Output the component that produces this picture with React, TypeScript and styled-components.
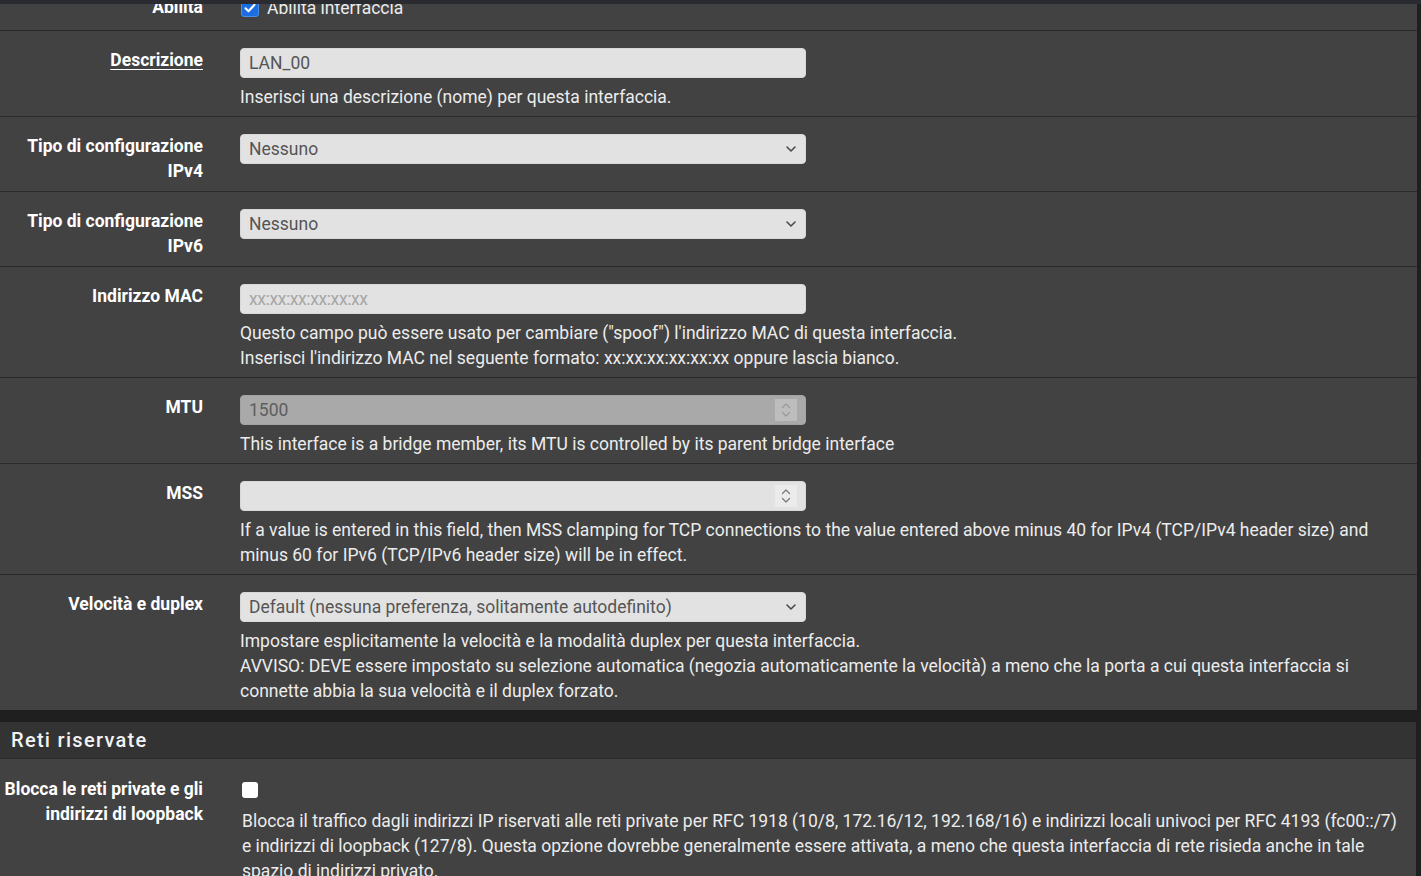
import styled, { createGlobalStyle } from "styled-components";
import { ReactNode } from "react";

const GlobalStyle = createGlobalStyle`
  html, body {
    margin: 0;
    padding: 0;
    background: #1f1f1f;
    font-family: Roboto, "Liberation Sans", sans-serif;
  }
`;

const Viewport = styled.div`
  height: 876px;
  overflow: hidden;
`;

const TopBar = styled.div`
  position: fixed;
  top: 0;
  left: 0;
  right: 0;
  height: 4px;
  background: #2a2a31;
  z-index: 10;
`;

const Panel = styled.section<{ $offset?: number; $gapRight: number }>`
  background: #424242;
  margin-top: ${(p) => p.$offset ?? 0}px;
  margin-right: ${(p) => p.$gapRight}px;
`;

const SectionHeader = styled.h2`
  margin: 0;
  height: 36px;
  line-height: 36px;
  padding-left: 11px;
  background: #333333;
  border-bottom: 1px solid #2b2b2b;
  color: #f2f2f2;
  font-size: 20px;
  font-weight: 500;
  letter-spacing: 1.3px;
`;

const Row = styled.div<{ $top?: number; $bottom?: number }>`
  display: grid;
  grid-template-columns: 203px 1fr;
  column-gap: 37px;
  padding: ${(p) => p.$top ?? 17}px 12px ${(p) => p.$bottom ?? 6}px 0;
  border-bottom: 1px solid #2b2b2b;
  &:last-child {
    border-bottom: none;
  }
`;

const Label = styled.div<{ $link?: boolean }>`
  text-align: right;
  font-weight: 700;
  font-size: 17.5px;
  line-height: 25px;
  color: #ffffff;
  text-decoration: ${(p) => (p.$link ? "underline" : "none")};
  text-underline-offset: 3px;
`;

const Control = styled.div<{ $indent?: number }>`
  display: flex;
  flex-direction: column;
  align-items: flex-start;
  min-width: 0;
  padding-left: ${(p) => p.$indent ?? 0}px;
`;

const Help = styled.div<{ $top?: number }>`
  margin-top: ${(p) => p.$top ?? 7}px;
  font-size: 17.5px;
  line-height: 25px;
  color: #ececec;
`;

const FieldBox = styled.div`
  position: relative;
  width: 566px;
  height: 30px;
`;

const TextInput = styled.input<{ $disabled?: boolean }>`
  box-sizing: border-box;
  width: 100%;
  height: 30px;
  margin: 0;
  padding: 0 8px;
  border: 1px solid ${(p) => (p.$disabled ? "#a3a3a3" : "#d8d8d8")};
  border-radius: 4px;
  background: ${(p) => (p.$disabled ? "#a9a9a9" : "#e2e2e2")};
  color: ${(p) => (p.$disabled ? "#5e5e5e" : "#555555")};
  font-family: Roboto, "Liberation Sans", sans-serif;
  font-size: 17.5px;
  outline: none;
  &::placeholder {
    color: #a6a6a6;
    letter-spacing: -0.4px;
  }
`;

const SelectBox = styled.div`
  box-sizing: border-box;
  display: flex;
  align-items: center;
  justify-content: space-between;
  width: 566px;
  height: 30px;
  padding: 0 8px 0 8px;
  border: 1px solid #d8d8d8;
  border-radius: 4px;
  background: #e2e2e2;
  color: #555555;
  font-size: 17.5px;
`;

const Spinner = styled.div<{ $disabled?: boolean }>`
  position: absolute;
  top: 4px;
  right: 9px;
  width: 22px;
  height: 22px;
  display: flex;
  flex-direction: column;
  align-items: center;
  justify-content: center;
  background: ${(p) => (p.$disabled ? "#bdbdbd" : "#ebebeb")};
  color: ${(p) => (p.$disabled ? "#9a9a9a" : "#7a7a7a")};
`;

const CheckLine = styled.label`
  display: flex;
  align-items: center;
  gap: 8px;
  height: 25px;
  font-size: 17.5px;
  color: #ececec;
`;

const Check = styled.span<{ $checked?: boolean }>`
  box-sizing: border-box;
  display: inline-flex;
  align-items: center;
  justify-content: center;
  margin-left: ${(p) => (p.$checked ? 1 : 0)}px;
  width: ${(p) => (p.$checked ? 18 : 16)}px;
  height: ${(p) => (p.$checked ? 18 : 16)}px;
  border-radius: 3px;
  background: ${(p) => (p.$checked ? "#1a6ee0" : "#ffffff")};
  border: ${(p) => (p.$checked ? "1px solid #4d8fe8" : "none")};
`;

const Chevron = () => (
  <svg width="12" height="12" viewBox="0 0 12 12" fill="none">
    <path d="M2 4l4 4 4-4" stroke="#4a4a4a" strokeWidth="1.6" strokeLinecap="round" strokeLinejoin="round" />
  </svg>
);

const SpinArrows = () => (
  <svg width="10" height="16" viewBox="0 0 10 16" fill="none">
    <path d="M1.5 5.5L5 2l3.5 3.5M1.5 10.5L5 14l3.5-3.5" stroke="currentColor" strokeWidth="1.3" strokeLinecap="round" strokeLinejoin="round" />
  </svg>
);

const Tick = () => (
  <svg width="14" height="14" viewBox="0 0 14 14" fill="none">
    <path d="M2.5 7.2l3 3 6-6.5" stroke="#fff" strokeWidth="2" strokeLinecap="round" strokeLinejoin="round" />
  </svg>
);

const Select = ({ value }: { value: string }) => (
  <SelectBox>
    <span>{value}</span>
    <Chevron />
  </SelectBox>
);

const NumberField = ({ value, disabled }: { value: string; disabled?: boolean }) => (
  <FieldBox>
    <TextInput readOnly value={value} $disabled={disabled} disabled={disabled} />
    <Spinner $disabled={disabled}>
      <SpinArrows />
    </Spinner>
  </FieldBox>
);

interface IFormRow {
  label: ReactNode;
  link?: boolean;
  top?: number;
  bottom?: number;
  indent?: number;
  children: ReactNode;
}

const FormRow = ({ label, link, top, bottom, indent, children }: IFormRow) => (
  <Row $top={top} $bottom={bottom}>
    <Label $link={link}>{label}</Label>
    <Control $indent={indent}>{children}</Control>
  </Row>
);

export default function App() {
  return (
    <Viewport>
      <GlobalStyle />
      <TopBar />
      <Panel $offset={-22} $gapRight={4}>
        <FormRow label="Abilita" bottom={10}>
          <CheckLine>
            <Check $checked>
              <Tick />
            </Check>
            Abilita interfaccia
          </CheckLine>
        </FormRow>
        <FormRow label="Descrizione" link>
          <FieldBox>
            <TextInput readOnly value="LAN_00" />
          </FieldBox>
          <Help>Inserisci una descrizione (nome) per questa interfaccia.</Help>
        </FormRow>
        <FormRow label="Tipo di configurazione IPv4" bottom={7}>
          <Select value="Nessuno" />
        </FormRow>
        <FormRow label="Tipo di configurazione IPv6" bottom={7}>
          <Select value="Nessuno" />
        </FormRow>
        <FormRow label="Indirizzo MAC">
          <FieldBox>
            <TextInput readOnly placeholder="xx:xx:xx:xx:xx:xx" />
          </FieldBox>
          <Help>
            Questo campo può essere usato per cambiare ("spoof") l'indirizzo MAC di questa interfaccia.
            <br />
            Inserisci l'indirizzo MAC nel seguente formato: xx:xx:xx:xx:xx:xx oppure lascia bianco.
          </Help>
        </FormRow>
        <FormRow label="MTU">
          <NumberField value="1500" disabled />
          <Help>This interface is a bridge member, its MTU is controlled by its parent bridge interface</Help>
        </FormRow>
        <FormRow label="MSS">
          <NumberField value="" />
          <Help>
            If a value is entered in this field, then MSS clamping for TCP connections to the value entered above
            minus 40 for IPv4 (TCP/IPv4 header size) and minus 60 for IPv6 (TCP/IPv6 header size) will be in effect.
          </Help>
        </FormRow>
        <FormRow label="Velocità e duplex">
          <Select value="Default (nessuna preferenza, solitamente autodefinito)" />
          <Help>
            Impostare esplicitamente la velocità e la modalità duplex per questa interfaccia.
            <br />
            AVVISO: DEVE essere impostato su selezione automatica (negozia automaticamente la velocità) a meno che la
            porta a cui questa interfaccia si connette abbia la sua velocità e il duplex forzato.
          </Help>
        </FormRow>
      </Panel>
      <Panel $offset={12} $gapRight={5}>
        <SectionHeader>Reti riservate</SectionHeader>
        <FormRow label="Blocca le reti private e gli indirizzi di loopback" top={18} indent={2}>
          <CheckLine>
            <Check />
          </CheckLine>
          <Help $top={7}>
            Blocca il traffico dagli indirizzi IP riservati alle reti private per RFC 1918 (10/8, 172.16/12,
            192.168/16) e indirizzi locali univoci per RFC 4193 (fc00::/7) e indirizzi di loopback (127/8). Questa
            opzione dovrebbe generalmente essere attivata, a meno che questa interfaccia di rete risieda anche in tale
            spazio di indirizzi privato.
          </Help>
        </FormRow>
      </Panel>
    </Viewport>
  );
}
